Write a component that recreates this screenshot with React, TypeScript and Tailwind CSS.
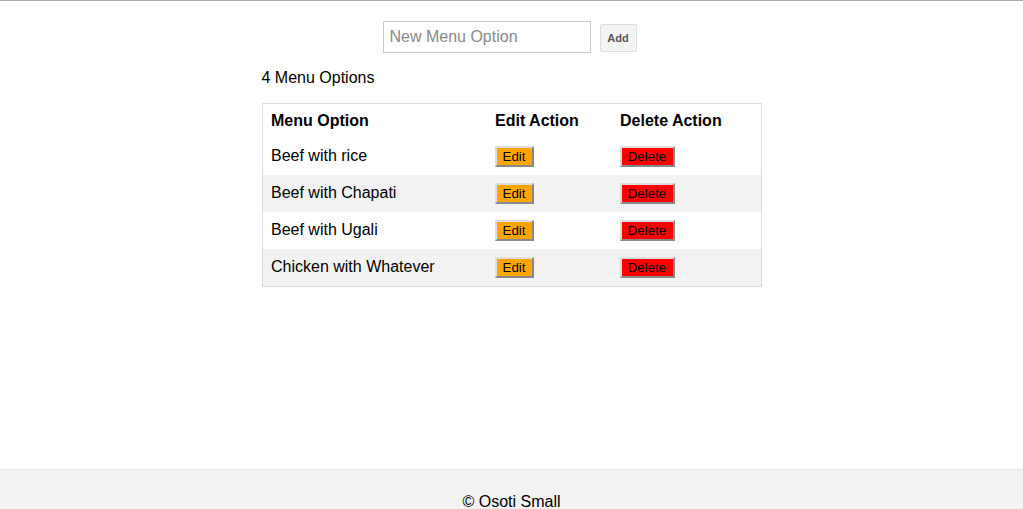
const options = ["Beef with rice", "Beef with Chapati", "Beef with Ugali", "Chicken with Whatever"]

export default function App() {
  return (
    <div className="min-h-screen bg-white text-black font-['Liberation_Sans',Arial,sans-serif] border-t border-[#a9a9a9]">
      <div className="h-[468px]">
        <div className="flex items-start justify-center pt-5 pr-1">
          <input
            type="text"
            placeholder="New Menu Option"
            className="w-[208px] h-[32px] border border-[#ccc] px-[6px] text-base placeholder:text-[#8a8a8a] outline-none"
          />
          <button className="ml-[9px] mt-[3px] h-[28px] w-[37px] rounded-[2px] border border-[#ddd] bg-[#f4f4f4] text-[11px] font-bold text-[#555]">
            Add
          </button>
        </div>
        <div className="mx-auto w-[500px]">
          <p className="mt-[16px] h-[18px] text-base leading-[18px]">{options.length} Menu Options</p>
          <table className="mt-[16px] w-[500px] border border-[#ddd] border-separate border-spacing-0 text-base">
            <thead>
              <tr className="h-[34px] text-left">
                <th className="w-[224px] pl-[8.5px] pr-2 font-bold">Menu Option</th>
                <th className="w-[125px] pl-[8.5px] pr-2 font-bold">Edit Action</th>
                <th className="pl-[8.5px] pr-2 font-bold">Delete Action</th>
              </tr>
            </thead>
            <tbody>
              {options.map((o, i) => (
                <tr key={o} className={"h-[37px] " + (i % 2 === 0 ? "bg-white" : "bg-[#f2f2f2]")}>
                  <td className="pl-[8.5px] pr-2 pb-[2px] leading-[18px]">{o}</td>
                  <td className="pl-2 pr-2">
                    <button className="flex h-[21px] w-[39px] items-center justify-center border-2 border-t-[#ddd] border-l-[#ddd] border-b-[#888] border-r-[#888] bg-[#ffa500] text-[13.33px] leading-none">
                      Edit
                    </button>
                  </td>
                  <td className="pl-2 pr-2">
                    <button className="flex h-[21px] w-[55px] items-center justify-center border-2 border-t-[#ddd] border-l-[#ddd] border-b-[#888] border-r-[#888] bg-[#ff0000] text-[13.33px] leading-none">
                      Delete
                    </button>
                  </td>
                </tr>
              ))}
            </tbody>
          </table>
        </div>
      </div>
      <footer className="h-[80px] border-t border-[#e6e6e6] bg-[#f2f2f2] pt-[20px] text-center text-base">
        © Osoti Small
      </footer>
    </div>
  )
}
